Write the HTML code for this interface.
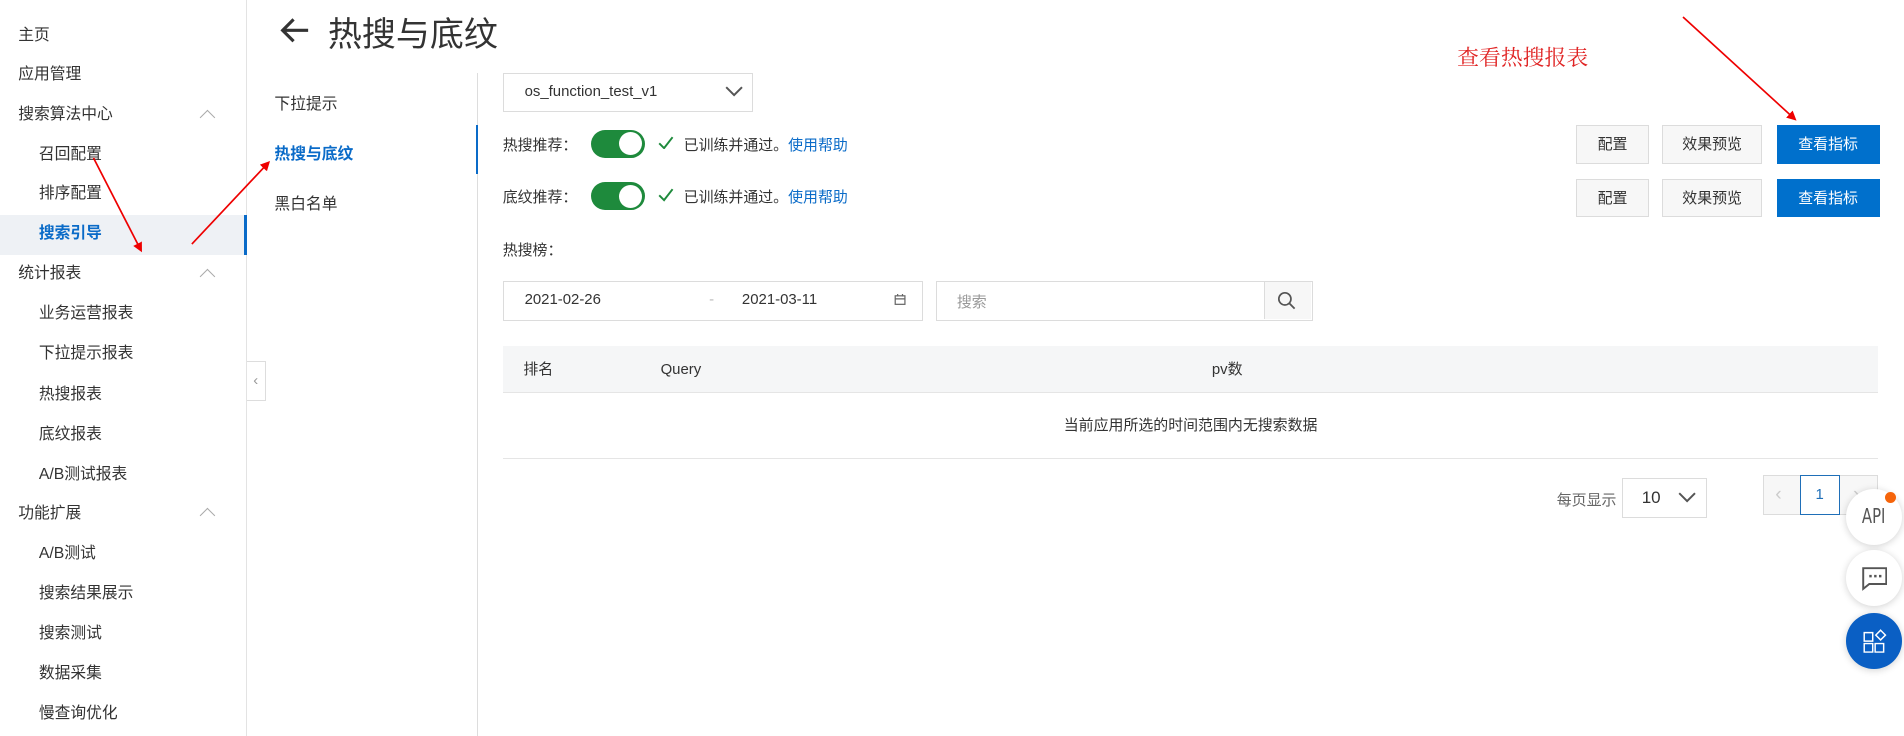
<!DOCTYPE html>
<html><head><meta charset="utf-8"><style>
*{margin:0;padding:0;box-sizing:border-box}
html,body{width:1904px;height:736px;overflow:hidden;background:#fff}
#w{width:1568px;height:606px;position:relative;zoom:1.21429;font-family:"Liberation Sans","Noto Sans CJK SC",sans-serif;font-size:12.3px;color:#333}
.a{position:absolute;white-space:nowrap}
.side{position:absolute;left:0;top:0;width:203px;height:606px;border-right:1px solid #e3e3e3;font-size:13px}
.si{position:absolute;left:15px;line-height:20px;color:#333}
.sub{left:32px}
.chev{position:absolute;left:166px;width:9px;height:9px;border-left:1.5px solid #aaa;border-top:1.5px solid #aaa;transform:rotate(45deg)}
.btn{position:absolute;height:32px;border:1px solid #dcdcdc;background:#f7f7f7;text-align:center;line-height:30px;color:#333}
.bb{background:#0070cc;border-color:#0070cc;color:#fff}
.tg{position:absolute;width:44px;height:23px;border-radius:12px;background:#1e8a3c}
.tg::after{content:"";position:absolute;right:2px;top:2px;width:19px;height:19px;border-radius:50%;background:#fff}
.fb{position:absolute;width:46px;height:46px;border-radius:50%;background:#fff;box-shadow:0 1px 6px rgba(0,0,0,.18)}
.th{position:absolute;top:285px;line-height:39px}
</style></head><body><div id="w">
<div class="side">
<div class="si" style="top:20px">主页</div>
<div class="si" style="top:52px">应用管理</div>
<div class="si" style="top:85px">搜索算法中心</div><div class="chev" style="top:92px"></div>
<div class="si sub" style="top:118px">召回配置</div>
<div class="si sub" style="top:150px">排序配置</div>
<div style="position:absolute;left:0;top:177px;width:203px;height:33px;background:#eef1f5;border-right:3px solid #0a6bc8"></div>
<div class="si sub" style="top:183px;color:#0a6bc8;font-weight:bold">搜索引导</div>
<div class="si" style="top:216px">统计报表</div><div class="chev" style="top:223px"></div>
<div class="si sub" style="top:249px">业务运营报表</div>
<div class="si sub" style="top:282px">下拉提示报表</div>
<div class="si sub" style="top:315px">热搜报表</div>
<div class="si sub" style="top:348px">底纹报表</div>
<div class="si sub" style="top:381px">A/B测试报表</div>
<div class="si" style="top:413px">功能扩展</div><div class="chev" style="top:420px"></div>
<div class="si sub" style="top:446px">A/B测试</div>
<div class="si sub" style="top:479px">搜索结果展示</div>
<div class="si sub" style="top:512px">搜索测试</div>
<div class="si sub" style="top:545px">数据采集</div>
<div class="si sub" style="top:578px">慢查询优化</div>
</div>
<div class="a" style="left:203px;top:297px;width:16px;height:33px;border:1px solid #ddd;border-left:none;background:#fff;color:#999;text-align:center;line-height:31px">&lsaquo;</div>
<svg class="a" style="left:230px;top:14px" width="26" height="22" viewBox="0 0 26 22"><path d="M24 11H3M12 2 3 11l9 9" fill="none" stroke="#333" stroke-width="2.6"/></svg>
<div class="a" style="left:270px;top:6px;font-size:28px;color:#333">热搜与底纹</div>
<div class="a" style="left:226px;top:75px;font-size:13px">下拉提示</div>
<div class="a" style="left:226px;top:116px;color:#0a6bc8;font-weight:bold;font-size:13px">热搜与底纹</div>
<div class="a" style="left:226px;top:157px;font-size:13px">黑白名单</div>
<div class="a" style="left:393px;top:60px;width:1px;height:546px;background:#ddd"></div>
<div class="a" style="left:392px;top:103px;width:2px;height:40px;background:#0a6bc8"></div>
<div class="a" style="left:414px;top:60px;width:206px;height:32px;border:1px solid #dcdcdc"></div>
<div class="a" style="left:432px;top:68px">os_function_test_v1</div>
<svg class="a" style="left:597px;top:71px" width="15" height="9"><path d="M1 1l6.5 6.5L14 1" fill="none" stroke="#555" stroke-width="1.6"/></svg>
<div class="a" style="left:414px;top:110px">热搜推荐：</div>
<div class="tg" style="left:487px;top:107px"></div>
<svg class="a" style="left:542px;top:112px" width="13" height="11"><path d="M1 6l4 4 7-9" fill="none" stroke="#1e8a3c" stroke-width="1.6"/></svg>
<div class="a" style="left:563px;top:110px">已训练并通过。<span style="color:#0a6bc8">使用帮助</span></div>
<div class="a" style="left:414px;top:153px">底纹推荐：</div>
<div class="tg" style="left:487px;top:150px"></div>
<svg class="a" style="left:542px;top:155px" width="13" height="11"><path d="M1 6l4 4 7-9" fill="none" stroke="#1e8a3c" stroke-width="1.6"/></svg>
<div class="a" style="left:563px;top:153px">已训练并通过。<span style="color:#0a6bc8">使用帮助</span></div>
<div class="btn" style="left:1298px;top:103px;width:60px;line-height:31px">配置</div>
<div class="btn" style="left:1369px;top:103px;width:82px;line-height:31px">效果预览</div>
<div class="btn bb" style="left:1463px;top:103px;width:85px;line-height:31px">查看指标</div>
<div class="btn" style="left:1298px;top:147px;width:60px;line-height:31px">配置</div>
<div class="btn" style="left:1369px;top:147px;width:82px;line-height:31px">效果预览</div>
<div class="btn bb" style="left:1463px;top:147px;width:85px;line-height:31px">查看指标</div>
<div class="a" style="left:414px;top:197px">热搜榜：</div>
<div class="a" style="left:414px;top:231px;width:346px;height:33px;border:1px solid #dcdcdc"></div>
<div class="a" style="left:432px;top:240px">2021-02-26</div>
<div class="a" style="left:584px;top:240px;color:#bbb">-</div>
<div class="a" style="left:611px;top:240px">2021-03-11</div>
<svg class="a" style="left:736px;top:242px" width="10" height="10"><rect x="1" y="1.5" width="8" height="7" fill="none" stroke="#666"/><path d="M1 4h8M3 0v2M7 0v2" stroke="#666"/></svg>
<div class="a" style="left:771px;top:231px;width:310px;height:33px;border:1px solid #dcdcdc"></div>
<div class="a" style="left:1041px;top:232px;width:39px;height:31px;background:#f7f7f7;border-left:1px solid #dcdcdc"></div>
<div class="a" style="left:788px;top:240px;color:#999">搜索</div>
<svg class="a" style="left:1052px;top:240px" width="16" height="16"><circle cx="6.5" cy="6.5" r="5" fill="none" stroke="#555" stroke-width="1.4"/><path d="M10 10l4.5 4.5" stroke="#555" stroke-width="1.5"/></svg>
<div class="a" style="left:414px;top:285px;width:1133px;height:39px;background:#f5f6f7;border-bottom:1px solid #e5e5e5"></div>
<div class="th" style="left:431px">排名</div>
<div class="th" style="left:544px">Query</div>
<div class="th" style="left:998px">pv数</div>
<div class="a" style="left:414px;top:324px;width:1133px;height:54px;border-bottom:1px solid #e5e5e5;text-align:center;line-height:54px">当前应用所选的时间范围内无搜索数据</div>
<div class="a" style="left:1282px;top:403px;color:#666">每页显示</div>
<div class="a" style="left:1336px;top:394px;width:70px;height:33px;border:1px solid #dcdcdc"></div>
<div class="a" style="left:1352px;top:402px;font-size:14px">10</div>
<svg class="a" style="left:1382px;top:405px" width="15" height="9"><path d="M1 1l6.5 6.5L14 1" fill="none" stroke="#555" stroke-width="1.6"/></svg>
<div class="a" style="left:1452px;top:391px;width:95px;height:33px;border:1px solid #dcdcdc;background:#f7f7f7"></div>
<div class="a" style="left:1482px;top:391px;width:33px;height:33px;border:1px solid #1f6fb8;background:#fff;color:#1f6fb8;text-align:center;line-height:31px">1</div>
<div class="a" style="left:1462px;top:398px;color:#ccc;font-size:16px">&lsaquo;</div>
<div class="a" style="left:1526px;top:398px;color:#ccc;font-size:16px">&rsaquo;</div>
<div class="fb" style="left:1520px;top:403px;font-family:'DejaVu Sans Condensed','Liberation Sans Narrow',sans-serif;font-size:17px;color:#555;text-align:center;line-height:46px"><span style="display:inline-block;transform:scaleX(.8)">API</span></div>
<div class="a" style="left:1552px;top:405px;width:9px;height:9px;border-radius:50%;background:#f5640a"></div>
<div class="fb" style="left:1520px;top:453px"><svg style="position:absolute;left:13px;top:14px" width="21" height="20"><path d="M1 1h19v13H6l-5 4z" fill="none" stroke="#555" stroke-width="1.6"/><path d="M6 7.5h2M10 7.5h2M14 7.5h2" stroke="#555" stroke-width="2"/></svg></div>
<div class="fb" style="left:1520px;top:505px;background:#0a5fc4"><svg style="position:absolute;left:14px;top:13px" width="20" height="20"><path d="M1 3h7v7H1zM1 12h7v7H1zM10 12h7v7h-7z" fill="none" stroke="#fff" stroke-width="1.2"/><path d="M14.5 1l4 4-4 4-4-4z" fill="none" stroke="#fff" stroke-width="1.2"/></svg></div>
<div class="a" style="left:1200px;top:34px;font-family:'Liberation Serif','Noto Serif CJK SC',serif;font-size:18px;color:#e02424">查看热搜报表</div>
<svg class="a" style="left:0;top:0" width="1568" height="606">
<defs><marker id="m" markerWidth="8" markerHeight="8" refX="6" refY="4" orient="auto" markerUnits="userSpaceOnUse"><path d="M0 0L8 4 0 8z" fill="#e00"/></marker></defs>
<g stroke="#e00" stroke-width="1.4" fill="none" marker-end="url(#m)">
<line x1="1386" y1="14" x2="1478" y2="98"/>
<line x1="77" y1="130" x2="116" y2="206"/>
<line x1="158" y1="201" x2="221" y2="134"/>
</g></svg>
</div></body></html>
